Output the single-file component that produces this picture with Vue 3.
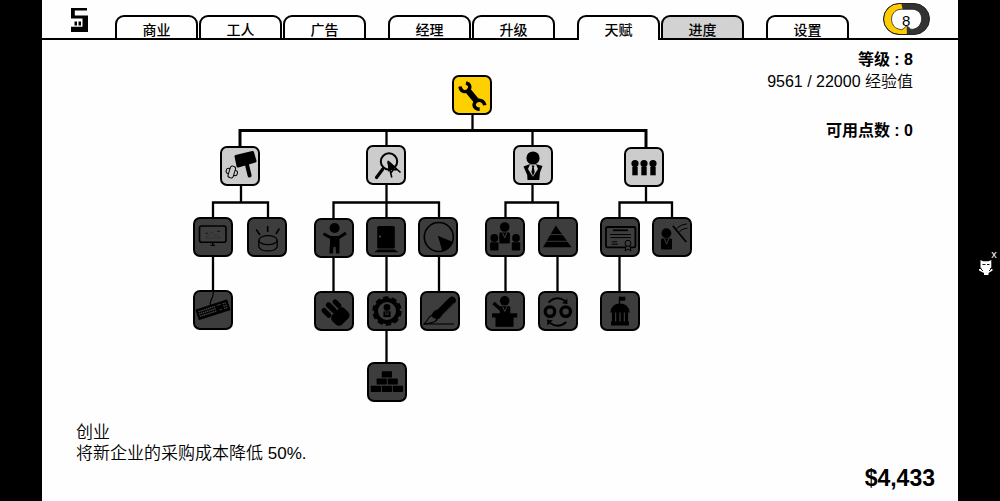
<script setup>
import { ref } from 'vue'

const tabGroups = [
  ['商业', '工人', '广告'],
  ['经理', '升级'],
  ['天赋', '进度'],
  ['设置'],
]
const activeTab = ref('天赋')

// x / y are node positions on the tree canvas
const nodes = [
  { id: 'wrench', label: '创业', x: 260, y: 35, state: 'owned' },
  { id: 'hammer', label: '锤子', x: 28, y: 106, state: 'open' },
  { id: 'search', label: '搜索', x: 174, y: 105, state: 'open' },
  { id: 'manager', label: '经理', x: 321, y: 105, state: 'open' },
  { id: 'people', label: '员工', x: 432, y: 107, state: 'open' },
  { id: 'monitor', label: '显示器', x: 1, y: 177, state: 'locked' },
  { id: 'coin', label: '硬币', x: 55, y: 177, state: 'locked' },
  { id: 'child', label: '孩子', x: 122, y: 178, state: 'locked' },
  { id: 'door', label: '门', x: 174, y: 177, state: 'locked' },
  { id: 'pie', label: '饼图', x: 226, y: 177, state: 'locked' },
  { id: 'team', label: '团队', x: 293, y: 177, state: 'locked' },
  { id: 'pyramid', label: '金字塔', x: 346, y: 177, state: 'locked' },
  { id: 'certificate', label: '证书', x: 408, y: 177, state: 'locked' },
  { id: 'teacher', label: '教师', x: 460, y: 177, state: 'locked' },
  { id: 'keyboard', label: '键盘', x: 1, y: 250, state: 'locked' },
  { id: 'fist', label: '拳头', x: 122, y: 251, state: 'locked' },
  { id: 'gear', label: '齿轮', x: 175, y: 251, state: 'locked' },
  { id: 'pen', label: '钢笔', x: 228, y: 251, state: 'locked' },
  { id: 'podium', label: '讲台', x: 293, y: 251, state: 'locked' },
  { id: 'cycle', label: '循环', x: 346, y: 251, state: 'locked' },
  { id: 'bank', label: '银行', x: 408, y: 251, state: 'locked' },
  { id: 'bricks', label: '砖块', x: 175, y: 322, state: 'locked' },
]

const line = (d, w = 1.5, extra = '') =>
  `<path d="${d}" fill="none" stroke="#000" stroke-width="${w}" ${extra}/>`

const icons = {
  wrench:
    line('M14 8C18.5 9 18.8 13 16 15.5C13 17.8 8.5 16.5 8 11.5', 3.4) +
    line('M15.5 15L24.5 26', 6) +
    line('M27.7 34.2C22.5 34 20.5 30 23.5 26.8C26.5 24 32 25 32.8 30.3', 3.4),
  hammer:
    '<path d="M16 10.5L32.5 6.5L35 15L18 20Z" stroke="#000" stroke-width="3" stroke-linejoin="round"/>' +
    line('M26.8 18L29.6 29.5', 4, 'stroke-linecap="round"') +
    '<g transform="translate(11.8 26) rotate(17)" fill="#ccc" stroke="#000"><rect x="-5.8" y="-2.7" width="11.6" height="5.4" rx="2.5"/><rect x="-2.7" y="-6" width="5.4" height="12" rx="2.2"/></g>',
  search:
    '<circle cx="23" cy="16.5" r="8.2" fill="none" stroke="#000" stroke-width="2"/>' +
    line('M16.5 24.5L10.5 32.5', 3.2, 'stroke-linecap="round"') +
    line('M17.8 22L15.5 25.5', 1.8) +
    '<path d="M21.5 15.5L30 22.5L24.5 24L22.5 27Z"/>' +
    line('M22 16L34.5 27.5M22 17L25.8 32.5M24.8 28L27.5 24.5L31 24.8', 1.6),
  manager:
    '<circle cx="20" cy="13" r="6.6"/><path d="M10.5 21.5L16.5 19.3H23.5L29.5 21L27 27.5L26.3 35H14.5L14.2 30Z"/><path d="M17 19.6L15 24L19.9 31.8L25 24L23 19.6Z" fill="#ccc"/><path d="M18.5 20.5H21.5L20.8 22.5L21.7 27L20 31L18.4 27L19.3 22.5Z"/>',
  people: [11, 20, 29]
    .map((x) => `<circle cx="${x}" cy="16.6" r="3.6"/><rect x="${x - 2.7}" y="20" width="5.4" height="8.3"/>`)
    .join(''),
  monitor:
    '<rect x="6.5" y="9" width="26.5" height="16.3" rx="2" fill="none" stroke="#000" stroke-width="1.6"/>' +
    line('M19.7 26V29M17.5 28.4H22', 1.4) +
    line('M13 21L19 14.5L22 19L24.5 17.5L27 21Z', 1, 'opacity=".18"') +
    line('M12.5 16.3H15M24 14.3H27', 1.2, 'opacity=".55"'),
  coin:
    line('M9.2 12.5L13 18M20.7 9V15M32.3 11.5L29 17', 1.6) +
    '<ellipse cx="21" cy="23.2" rx="9.2" ry="4.5" fill="none" stroke="#000" stroke-width="1.3"/>' +
    line('M11.8 23.5V29.3C13.5 35.5 28.5 35.5 30.2 29.3V23.5', 1.3),
  child:
    '<circle cx="20.6" cy="10" r="5"/><rect x="16" y="18" width="9.5" height="11"/>' +
    line('M9.5 15.8L17 19.8H24.5L32 15', 3) +
    line('M17.6 28L17.2 35.5M23.4 28L23.8 35.5', 3.6),
  door:
    '<rect x="11.2" y="9" width="17.6" height="22.5" rx="1.5"/><circle cx="14" cy="19.6" r="1" fill="#555"/><path d="M12 32.5H28.5L32.5 35.2H8Z"/>',
  pie:
    '<circle cx="20.8" cy="20" r="14.5" fill="none" stroke="#000" stroke-width="1.6"/><path d="M19.8 18.8L35 25A15 15 0 0 1 24.5 34.5Z"/>',
  team:
    '<circle cx="19.7" cy="10" r="4.8"/><rect x="14.3" y="15.5" width="10.6" height="11" rx="1"/><path d="M17.7 16L19.7 21L21.7 16" fill="none" stroke="#3d3d3d"/>' +
    [9.3, 31].map((x) => `<circle cx="${x}" cy="21" r="3.9"/><rect x="${x - 4.2}" y="25.2" width="8.4" height="8.3" rx="1"/>`).join(''),
  pyramid:
    '<path d="M17.8 8.5L33.5 30.3H5Z"/><path d="M8 17.6H30M6 24.3H34" stroke="#3d3d3d" stroke-width=".9"/>',
  certificate:
    '<rect x="6" y="10" width="29.4" height="20.4" rx="1.5" fill="none" stroke="#000" stroke-width="1.8"/>' +
    line('M13 13.3H28', 1.7) +
    line('M10 17.5H31M10.5 20.6H31M12 24.8H17M11.5 27.2H17.8', 1) +
    '<g fill="#3d3d3d" stroke="#000"><path d="M26.3 28L25 34L28 32L31 34L29.7 28"/><circle cx="28" cy="26.3" r="3"/></g>',
  teacher:
    '<circle cx="14.4" cy="16.2" r="4.9"/><rect x="9" y="21.5" width="11" height="11" rx="1"/><path d="M12.5 22L14.6 27L16.8 22" fill="none" stroke="#3d3d3d"/>' +
    line('M20.8 8.8L34.2 25', 1.8) +
    line('M24.5 11.5Q28.5 7.5 35 6.8M27.5 14.5Q30.5 11.5 35.5 11', 1),
  keyboard:
    line('M17.5 15C16 10 21 9 20.3 1', 1.2) +
    '<g transform="translate(20 19.8) rotate(-18)"><rect x="-16.7" y="-5.6" width="33.4" height="11.2" rx=".6"/><path d="M-14.5 -2.6H3M-14.5 -.2H3M-14.5 2.2H3M11 -2.6H15M11 -.2H15M11 2.2H15" stroke="#484848" stroke-width="1.3" stroke-dasharray="1.4 .6"/><path d="M5 -3H9M6 2.3H9" stroke="#3d3d3d"/></g>',
  fist:
    line('M10 19.5L14.8 24.3', 5, 'stroke-linecap="round"') +
    line('M14.6 14L20 19.4', 5.4, 'stroke-linecap="round"') +
    line('M21 10.8L25 14.8', 5, 'stroke-linecap="round"') +
    '<rect x="17.5" y="18.7" width="17.6" height="13.8" rx="4.5" transform="rotate(-45 26.3 25.6)"/>',
  gear:
    '<circle cx="20" cy="20" r="11" fill="none" stroke="#000" stroke-width="4"/><circle cx="20" cy="20" r="13.4" fill="none" stroke="#000" stroke-width="2.6" stroke-dasharray="5.4 3.02"/><circle cx="20" cy="16.4" r="3.4"/><rect x="16.4" y="20.3" width="7.2" height="5.8"/><path d="M18.8 20.5V23.5H21V20.5" fill="none" stroke="#3d3d3d" stroke-width=".8"/>',
  pen:
    line('M32 9.5L20 21.5', 7.6, 'stroke-linecap="round"') +
    '<path d="M34.3 12L21.5 25" stroke="#555" stroke-width=".7"/><path d="M17.5 18.5L22 24L19.5 27.5Q15 29 11.5 25.5Q12 20 17.5 18.5Z"/>' +
    line('M12 24Q8.5 26 7.5 29L4 33Q12 32 15 30.5Q18 28.5 17.5 26', 1.1) +
    line('M4 33H34', 1.1),
  podium:
    '<circle cx="19.7" cy="9.8" r="4.8"/><rect x="14.8" y="15.2" width="10.5" height="9" rx="1"/><path d="M17.8 16L19.8 20.5L21.8 16" fill="none" stroke="#3d3d3d"/>' +
    line('M8.5 12L16.5 19', 3.4) +
    '<rect x="7" y="22.3" width="25.2" height="4.2"/><rect x="10.5" y="26" width="18" height="9.8"/>',
  cycle:
    '<g fill="none" stroke="#000" stroke-width="3.3"><circle cx="12" cy="20.6" r="4.8"/><circle cx="27.7" cy="20.6" r="4.8"/></g>' +
    line('M10.5 11.5Q18.5 4 27 10', 1.9) +
    line('M28.3 31Q20.5 38 12 32', 1.9) +
    '<path d="M29.2 7.8L29.5 13L24 12.2ZM9 28.5L9.4 34.5L14.8 29.6Z"/>',
  bank:
    line('M19.5 5.7V13', 1.3) +
    '<rect x="19.5" y="5.7" width="5.8" height="4"/><path d="M10.3 21.5Q11.5 12.5 20 12.5Q28.5 12.5 29.7 21.5Z"/><rect x="11" y="30.5" width="18" height="4"/>' +
    line('M13.5 21V31M17.8 21V31M22.2 21V31M26.5 21V31', 3.2),
  bricks: [
    [14.8, 9.3], [9.6, 16.4], [20.6, 16.4], [3.8, 23.7], [14.8, 23.7], [25.8, 23.7],
  ]
    .map(([x, y]) => `<rect x="${x}" y="${y}" width="10.2" height="6.2" rx=".6"/>`)
    .join(''),
}
</script>

<template>
  <div class="screen">
    <main class="game">
      <header class="topbar">
        <svg class="logo" viewBox="0 0 17 24" aria-hidden="true">
          <path d="M0 0H16V2.4H3.8V7.5H17V24H0V18.7H11.5V10.4H0Z" />
          <path d="M3.5 13.5H6V17.5H3.5ZM7.5 13.5H10V17.5H7.5Z" />
        </svg>
        <nav class="tabs">
          <div v-for="(group, i) in tabGroups" :key="i" class="tab-group">
            <button
              v-for="tab in group"
              :key="tab"
              type="button"
              class="tab"
              :class="{ active: tab === activeTab, shaded: tab === '进度' }"
              @click="activeTab = tab"
            >{{ tab }}</button>
          </div>
        </nav>
        <svg class="level" viewBox="0 0 47 32">
          <rect x=".5" y=".5" width="46" height="31" rx="15.5" fill="#333" />
          <path d="M18.5 1H16A15 15 0 0 0 16 31H23.8V22L20 8Z" fill="#fc0" />
          <rect x=".5" y=".5" width="46" height="31" rx="15.5" fill="none" stroke="#222" />
          <path d="M17 6.3H30C42 7.5 41 24.5 30 26.3Q27.5 27 26 24.5L23.3 23L21.5 25Q19 28 15.5 26C6 23.5 6 8 17 6.3Z" fill="#fefefe" stroke="#222" stroke-width=".8" />
          <text x="23.2" y="22.5" text-anchor="middle">8</text>
        </svg>
      </header>

      <div class="content">
        <section class="tree">
          <svg class="links" viewBox="0 0 502 364" aria-hidden="true">
            <path class="trunk" d="M48 106V90.5H454V107" />
            <path d="M280.5 75V90M194.5 90V105M340.5 90V105" />
            <path d="M49 146V162M21 177V162.5H76V177M21 217V250" />
            <path d="M194.5 145V177M141.5 178V162.5H247V177M141.5 218V251M194.5 217V251M247 217V251M194.5 291V322" />
            <path d="M340.5 145V162M313.5 177V162.5H366V177M313.5 217V251M365.5 217V251" />
            <path d="M454 147V162M427.5 177V162.5H480V177M427.5 217V251" />
          </svg>
          <button
            v-for="node in nodes"
            :key="node.id"
            type="button"
            class="node"
            :class="node.state"
            :aria-label="node.label"
            :style="{ left: node.x + 'px', top: node.y + 'px' }"
          >
            <svg viewBox="2 2 36 36" v-html="icons[node.id]"></svg>
          </button>
        </section>

        <aside class="stats">
          <p class="strong">等级 : 8</p>
          <p>9561 / 22000 经验值</p>
          <p class="strong points">可用点数 : 0</p>
        </aside>
      </div>

      <footer class="bottom">
        <div class="description">
          <p>创业</p>
          <p>将新企业的采购成本降低 50%.</p>
        </div>
        <p class="money">$4,433</p>
      </footer>
    </main>

    <div class="side">
      <button type="button" class="close">x</button>
      <svg class="cat" viewBox="0 0 14 15" aria-hidden="true">
        <path d="M1.5 0L4 1.3H9.5L12.3 0V7.5L10.5 9H13.5V10.5L9.5 13V15H5V13L0 10.5V9H3L1.5 7.5Z" fill="#fff" />
        <path d="M3.5 4.5H6.5M8 4.5H10.5M1 8L4 11M13 8L10 11" stroke="#111" />
      </svg>
    </div>
  </div>
</template>

<style>
body {
  background: #000;
}
</style>

<style scoped>
.screen {
  display: grid;
  grid-template-columns: 42px 1fr 42px;
  min-height: 100vh;
  background: #000;
  color: #000;
  font-family: "Liberation Sans", "Noto Sans CJK SC", sans-serif;
}

p {
  margin: 0;
}

.game {
  grid-column: 2;
  display: flex;
  flex-direction: column;
  background: #fefefe;
}

.topbar {
  display: flex;
  align-items: flex-end;
  height: 40px;
  padding: 0 28px 0 29px;
  box-sizing: border-box;
  box-shadow: inset 0 -2px #000;
}

.logo {
  width: 17px;
  height: 24px;
  margin-bottom: 8px;
}

.tabs {
  display: flex;
  gap: 22px;
  margin-left: 27px;
}

.tab-group {
  display: flex;
  gap: 1px;
}

.tab {
  width: 83px;
  height: 25px;
  padding: 3px 0 0;
  border: 2px solid #000;
  border-radius: 9px 9px 0 0;
  background: #fefefe;
  color: #000;
  font: 500 14px/20px "Liberation Sans", "Noto Sans CJK SC", sans-serif;
  cursor: pointer;
}

.tab.shaded {
  background: #d2d2d2;
}

.tab.active {
  padding-bottom: 2px;
  border-bottom: 0;
  background: #fefefe;
}

.level {
  width: 47px;
  height: 32px;
  margin-left: auto;
  margin-bottom: 5px;
}

.level text {
  font-size: 15px;
}

.content {
  display: flex;
  justify-content: space-between;
  padding: 0 45px 0 150px;
}

.tree {
  position: relative;
  flex: none;
  width: 502px;
  height: 364px;
}

.links {
  display: block;
  width: 100%;
  height: 100%;
  fill: none;
  stroke: #000;
  stroke-width: 2.3;
}

.trunk {
  stroke-width: 3;
}

.node {
  position: absolute;
  width: 40px;
  height: 40px;
  padding: 0;
  border: 2px solid #000;
  border-radius: 7px;
  cursor: pointer;
}

.node svg {
  display: block;
  width: 36px;
  height: 36px;
}

.owned {
  background: #ffd000;
}

.open {
  background: #ccc;
}

.locked {
  background: #3d3d3d;
}

.stats {
  padding-top: 9px;
  font-size: 16px;
  font-weight: 350;
  line-height: 22px;
  text-align: right;
  white-space: nowrap;
}

.strong {
  font-weight: bold;
}

.points {
  margin-top: 27px;
}

.bottom {
  display: flex;
  justify-content: space-between;
  margin-top: auto;
  padding: 18px 23px 10px 34px;
}

.description {
  min-height: 69px;
  font-size: 17px;
  font-weight: 350;
  line-height: 21px;
}

.money {
  align-self: flex-end;
  font-size: 23px;
  font-weight: bold;
  line-height: 26px;
}

.side {
  grid-column: 3;
  display: flex;
  flex-direction: column;
  align-items: flex-end;
  padding-top: 248px;
}

.close {
  width: 12px;
  height: 12px;
  padding: 0;
  border: 0;
  background: none;
  color: #fff;
  font: 11px/12px "Liberation Sans", sans-serif;
  cursor: pointer;
}

.cat {
  width: 14px;
  height: 15px;
  margin-right: 7px;
}
</style>
